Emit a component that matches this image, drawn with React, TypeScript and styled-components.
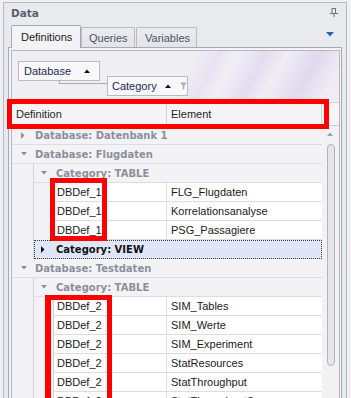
import React from 'react';
import styled, { createGlobalStyle } from 'styled-components';

const GlobalStyle = createGlobalStyle`
  html, body { margin: 0; padding: 0; background: #f0f0f2; }
  body { font-family: "Liberation Sans", Arial, sans-serif; font-size: 11px; }
  * { box-sizing: border-box; }
  svg { flex-shrink: 0; }
`;

const Root = styled.div`
  position: relative;
  width: 351px;
  height: 398px;
  overflow: hidden;
  padding: 2px 0 0 3px;
  background: #f0f0f2;
`;

const Panel = styled.div`
  width: 344px;
  height: 396px;
  border: 1px solid #b5b9c3;
  border-bottom: none;
  background: #e9eaee;
  display: flex;
  flex-direction: column;
`;

const TitleBar = styled.div`
  height: 19px;
  flex: none;
  display: flex;
  align-items: center;
  justify-content: space-between;
  padding: 0 8px 0 7px;
  font-family: "DejaVu Sans", sans-serif;
  font-weight: bold;
  font-size: 10.5px;
  color: #596070;
`;

const TabStrip = styled.div`
  height: 25px;
  flex: none;
  display: flex;
  align-items: flex-end;
  padding: 0 8px 0 7px;
`;

const Tab = styled.div<{ $active?: boolean; $w: number; $pl: number; $ml?: number }>`
  position: relative;
  width: ${(p) => p.$w}px;
  margin-left: ${(p) => p.$ml ?? 0}px;
  height: ${(p) => (p.$active ? 23 : 20)}px;
  margin-bottom: ${(p) => (p.$active ? -1 : 0)}px;
  z-index: ${(p) => (p.$active ? 1 : 0)};
  padding-left: ${(p) => p.$pl}px;
  display: flex;
  align-items: center;
  border: 1px solid ${(p) => (p.$active ? '#a6aab5' : '#b8bbc5')};
  border-bottom: none;
  border-radius: 2px 2px 0 0;
  background: ${(p) => (p.$active ? '#f3f3f6' : 'linear-gradient(#ebecf0, #e3e4e9)')};
  color: ${(p) => (p.$active ? '#1c1c1c' : '#4d5362')};
`;

const TabMenu = styled.div`
  margin-left: auto;
  margin-right: 4px;
  align-self: center;
  display: flex;
`;

const Page = styled.div`
  flex: 1;
  min-height: 0;
  margin: 0 4px;
  border: 1px solid #a6aab5;
  border-bottom: none;
  background: #f3f3f6;
  padding: 2px 1px 0 2px;
  display: flex;
  flex-direction: column;
`;

const Grid = styled.div`
  flex: 1;
  min-height: 0;
  border: 1px solid #b4b8c2;
  border-bottom: none;
  background: #f3f3f6;
  display: flex;
  flex-direction: column;
  overflow: hidden;
`;

const GroupPanel = styled.div`
  height: 52px;
  flex: none;
  padding: 10px 0 0 6px;
  border-bottom: 1px solid #d3d5db;
  display: flex;
  flex-direction: column;
  background:
    linear-gradient(118deg, rgba(255,255,255,0) 0%, rgba(255,255,255,0) 52%, rgba(230,223,242,0.8) 59%, rgba(243,240,248,0.5) 64%, rgba(226,217,240,0.85) 72%, rgba(240,236,247,0.6) 78%, rgba(221,211,237,0.8) 87%, rgba(238,234,246,0.5) 95%),
    #efeff2;
`;

const FieldBox = styled.div<{ $w: number; $pr: number; $gap: number }>`
  width: ${(p) => p.$w}px;
  height: 20px;
  flex: none;
  border: 1px solid #b9bcc6;
  background: #f8f8fa;
  display: flex;
  align-items: center;
  padding: 0 ${(p) => p.$pr}px 0 ${(p) => (p.$gap === 8 ? 4 : 5)}px;
  color: #1d2a57;
  gap: ${(p) => p.$gap}px;
  white-space: nowrap;
`;

const FieldName = styled.span<{ $grow?: boolean }>`
  flex: ${(p) => (p.$grow ? 1 : 'none')};
`;

const FieldRow = styled.div`
  display: flex;
  margin-top: -5px;
`;

const Connector = styled.div`
  width: 48px;
  height: 4px;
  flex: none;
  margin: 4px 0 0 41px;
  border-left: 1px solid #a6aab4;
  border-bottom: 1px solid #a6aab4;
`;

const Header = styled.div`
  height: 23px;
  flex: none;
  display: flex;
  background: #f5f5f7;
  border-bottom: 1px solid #c8cad1;
  color: #1f1f1f;
`;

const HeaderCell = styled.div<{ $w?: number }>`
  ${(p) => (p.$w ? `width: ${p.$w}px; flex: none;` : 'flex: 1;')}
  display: flex;
  align-items: center;
  padding-left: 4px;
  border-right: 1px solid #d0d2d8;
`;

const HeaderFiller = styled.div`
  width: 17px;
  flex: none;
`;

const Body = styled.div`
  flex: 1;
  min-height: 0;
  display: flex;
`;

const Rows = styled.div`
  width: 310px;
  flex: none;
  display: flex;
  flex-direction: column;
  overflow: hidden;
`;

const GroupRow = styled.div<{ $pl: number; $focused?: boolean }>`
  height: 19px;
  flex: none;
  display: flex;
  align-items: center;
  padding-left: ${(p) => p.$pl}px;
  border-bottom: 1px solid #dcdde2;
  background: ${(p) => (p.$focused ? '#dee6f7' : '#f3f3f6')};
  outline: ${(p) => (p.$focused ? '1px dotted #3a3a3a' : 'none')};
  outline-offset: -1px;
  font-family: "DejaVu Sans", sans-serif;
  font-weight: bold;
  font-size: 10px;
  color: ${(p) => (p.$focused ? '#111111' : '#8a8f9b')};
  white-space: nowrap;
`;

const ArrowBox = styled.span<{ $w: number }>`
  width: ${(p) => p.$w}px;
  flex: none;
  display: flex;
  align-items: center;
`;

const Children = styled.div<{ $indent: number }>`
  display: flex;
  flex-direction: column;
  padding-left: ${(p) => p.$indent}px;
`;

const ChildInner = styled.div`
  display: flex;
  flex-direction: column;
  border-left: 1px solid #d3d4da;
`;

const DataRows = styled.div`
  display: flex;
  flex-direction: column;
  padding-left: 19px;
`;

const DataRow = styled.div`
  height: 19px;
  flex: none;
  display: flex;
  background: #ffffff;
  border-left: 1px solid #d3d4da;
  border-bottom: 1px solid #dcdde2;
  color: #1a1a1a;
`;

const Cell = styled.div<{ $w?: number }>`
  ${(p) => (p.$w ? `width: ${p.$w}px; flex: none; border-right: 1px solid #dcdde2;` : 'flex: 1;')}
  display: flex;
  align-items: center;
  padding-left: ${(p) => (p.$w ? 3 : 4)}px;
  white-space: nowrap;
  overflow: hidden;
`;

const ScrollBar = styled.div`
  width: 17px;
  flex: none;
  background: #f2f2f5;
  display: flex;
  flex-direction: column;
  align-items: center;
  padding-top: 6px;
`;

const Thumb = styled.div`
  width: 8px;
  height: 222px;
  margin-top: 8px;
  margin-left: 1px;
  border: 1px solid #b1b4be;
  border-radius: 4px;
  background: #e5e6ea;
`;

const Mark = styled.div`
  position: absolute;
  border: 5px solid #ff0000;
  pointer-events: none;
`;

const Arrow = ({ open, color }: { open: boolean; color: string }) =>
  open ? (
    <svg width="7" height="4" viewBox="0 0 7 4">
      <path d="M0 0 H6 L3 3.5 Z" fill={color} />
    </svg>
  ) : (
    <svg width="4" height="7" viewBox="0 0 4 7">
      <path d="M0 0 L3.5 3.5 L0 7 Z" fill={color} />
    </svg>
  );

const UpTri = ({ color = '#111' }: { color?: string }) => (
  <svg width="7" height="4" viewBox="0 0 7 4">
    <path d="M0 4 H6 L3 0.5 Z" fill={color} />
  </svg>
);

const FilterIcon = () => (
  <svg width="7" height="8" viewBox="0 0 7 8">
    <path d="M0 0.5 H7 L4.3 3.6 V7.5 H2.7 V3.6 Z" fill="#9fb0c6" />
  </svg>
);

const PinIcon = () => (
  <svg width="8" height="9" viewBox="0 0 8 9">
    <rect x="2" y="0.5" width="3.5" height="5" fill="none" stroke="#6f7483" />
    <rect x="0" y="5" width="8" height="1" fill="#6f7483" />
    <rect x="3.5" y="6" width="1" height="3" fill="#6f7483" />
  </svg>
);

type Cat = { name: string; open: boolean; focused?: boolean; rows?: [string, string][] };
type Db = { name: string; open: boolean; cats?: Cat[] };

const data: Db[] = [
  { name: 'Database: Datenbank 1', open: false },
  {
    name: 'Database: Flugdaten',
    open: true,
    cats: [
      {
        name: 'Category: TABLE',
        open: true,
        rows: [
          ['DBDef_1', 'FLG_Flugdaten'],
          ['DBDef_1', 'Korrelationsanalyse'],
          ['DBDef_1', 'PSG_Passagiere'],
        ],
      },
      { name: 'Category: VIEW', open: false, focused: true },
    ],
  },
  {
    name: 'Database: Testdaten',
    open: true,
    cats: [
      {
        name: 'Category: TABLE',
        open: true,
        rows: [
          ['DBDef_2', 'SIM_Tables'],
          ['DBDef_2', 'SIM_Werte'],
          ['DBDef_2', 'SIM_Experiment'],
          ['DBDef_2', 'StatResources'],
          ['DBDef_2', 'StatThroughput'],
          ['DBDef_2', 'StatThroughputSum'],
        ],
      },
    ],
  },
];

export default function App() {
  return (
    <Root>
      <GlobalStyle />
      <Panel>
        <TitleBar>
          <span>Data</span>
          <PinIcon />
        </TitleBar>
        <TabStrip>
          <Tab $active $w={70} $pl={9}>Definitions</Tab>
          <Tab $w={54} $pl={7}>Queries</Tab>
          <Tab $w={61} $pl={8} $ml={1}>Variables</Tab>
          <TabMenu>
            <svg width="8" height="5" viewBox="0 0 8 5">
              <path d="M0 0 H8 L4 4.5 Z" fill="#2c5fb3" />
            </svg>
          </TabMenu>
        </TabStrip>
        <Page>
          <Grid>
            <GroupPanel>
              <FieldBox $w={82} $pr={8} $gap={4}>
                <FieldName $grow>Database</FieldName>
                <UpTri />
              </FieldBox>
              <FieldRow>
                <Connector />
                <FieldBox $w={81} $pr={2} $gap={8}>
                  <FieldName>Category</FieldName>
                  <UpTri />
                  <FilterIcon />
                </FieldBox>
              </FieldRow>
            </GroupPanel>
            <Header>
              <HeaderCell $w={155}>Definition</HeaderCell>
              <HeaderCell>Element</HeaderCell>
              <HeaderFiller />
            </Header>
            <Body>
              <Rows>
                {data.map((db) => (
                  <React.Fragment key={db.name}>
                    <GroupRow $pl={9}>
                      <ArrowBox $w={14}>
                        <Arrow open={db.open} color="#8a8f9b" />
                      </ArrowBox>
                      {db.name}
                    </GroupRow>
                    {db.open && db.cats && (
                      <Children $indent={21}>
                        <ChildInner>
                          {db.cats.map((c) => (
                            <React.Fragment key={c.name}>
                              <GroupRow $pl={7} $focused={c.focused}>
                                <ArrowBox $w={15}>
                                  <Arrow open={c.open} color={c.focused ? '#111' : '#8a8f9b'} />
                                </ArrowBox>
                                {c.name}
                              </GroupRow>
                              {c.open && c.rows && (
                                <DataRows>
                                  {c.rows.map(([d, e]) => (
                                    <DataRow key={e}>
                                      <Cell $w={113}>{d}</Cell>
                                      <Cell>{e}</Cell>
                                    </DataRow>
                                  ))}
                                </DataRows>
                              )}
                            </React.Fragment>
                          ))}
                        </ChildInner>
                      </Children>
                    )}
                  </React.Fragment>
                ))}
              </Rows>
              <ScrollBar>
                <UpTri color="#9da0aa" />
                <Thumb />
              </ScrollBar>
            </Body>
          </Grid>
        </Page>
      </Panel>
      <Mark style={{ left: 7, top: 99, width: 322, height: 30 }} />
      <Mark style={{ left: 50, top: 178, width: 57, height: 63 }} />
      <Mark style={{ left: 45, top: 295, width: 67, height: 120, borderLeftWidth: 6 }} />
    </Root>
  );
}
